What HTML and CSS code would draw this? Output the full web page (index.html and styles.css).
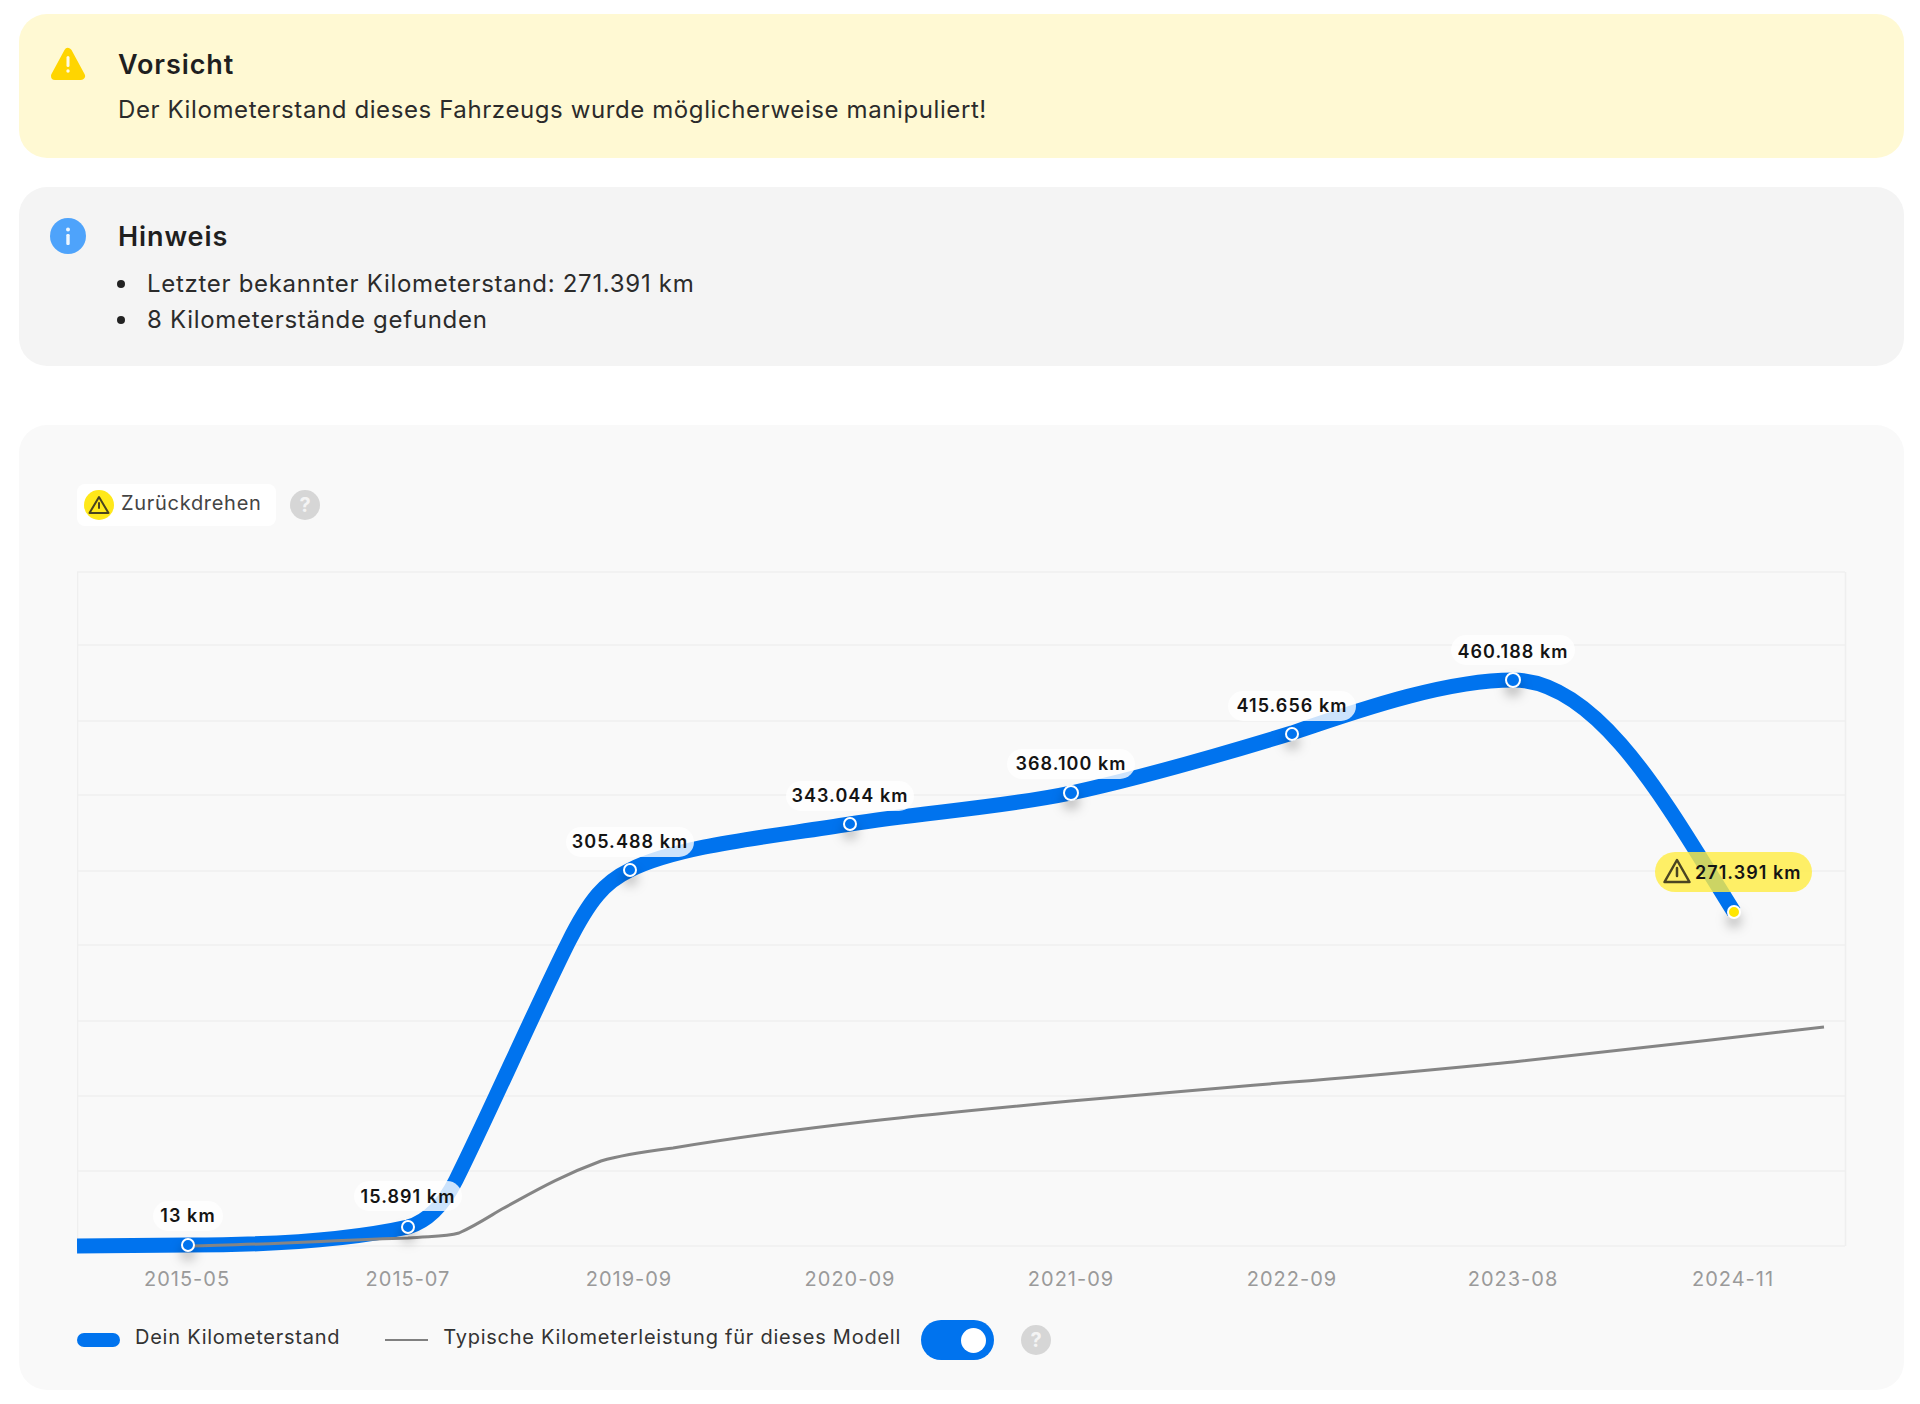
FILE: index.html
```html
<!DOCTYPE html>
<html lang="de">
<head>
<meta charset="utf-8">
<title>Kilometerstand</title>
<link rel="stylesheet" href="styles.css">
</head>
<body>
<main class="page">
  <section class="alert alert-warn">
    <svg class="alert-icon" viewBox="0 0 36 36"><path class="warn-shape" d="M18 5 31 29H5z"/><rect class="warn-mark" x="16.500" y="9" width="3" height="11" rx="1.500"/><circle class="warn-mark" cx="18" cy="24" r="1.700"/></svg>
    <div class="alert-body">
      <h2 class="alert-title alert-title-warn">Vorsicht</h2>
      <p class="alert-text">Der Kilometerstand dieses Fahrzeugs wurde möglicherweise manipuliert!</p>
    </div>
  </section>
  <section class="alert alert-info">
    <svg class="alert-icon info-icon" viewBox="0 0 36 36"><circle class="info-shape" cx="18" cy="18" r="18"/><rect class="warn-mark" x="16.300" y="16" width="3.400" height="11" rx="1.200"/><circle class="warn-mark" cx="18" cy="11.500" r="2"/></svg>
    <div class="alert-body">
      <h2 class="alert-title alert-title-info">Hinweis</h2>
      <ul class="alert-list">
        <li>Letzter bekannter Kilometerstand: 271.391 km</li>
        <li>8 Kilometerstände gefunden</li>
      </ul>
    </div>
  </section>
  <section class="chart-card">
    <div class="chip-row">
      <div class="chip">
        <span class="chip-dot">
          <svg class="chip-icon" viewBox="0 0 24 24"><path class="tri" d="M12 4 21.500 20H2.500z"/><path class="tri" d="M12 10v5"/></svg>
        </span>
        <span class="chip-label">Zurückdrehen</span>
      </div>
      <span class="help">?</span>
    </div>
    <svg class="plot" viewBox="77 560 1770 730">
      <g class="grid">
        <path d="M77 572H1845M77 645H1845M77 721H1845M77 795H1845M77 871H1845M77 945H1845M77 1021H1845M77 1096H1845M77 1171H1845M77 1246H1845"/>
        <path d="M77.500 572V1246M1845.500 572V1246"/>
      </g>
      <path class="km-line" d="M77 1246L188 1245C260 1245 345 1241 408 1227C425 1222 442 1208 456 1180C488 1116 535 1009 568 943C590 899 605 882 630 870C680 845 770 837 850 824C925 812 1000 808 1071 793C1145 777 1220 755 1292 733C1370 706 1450 680 1513 680C1600 680 1670 810 1734 912"/>
      <path class="typ-line" d="M188 1246C260 1245 340 1240 408 1238C430 1236 445 1237 459 1233C475 1226 490 1216 502 1209C530 1194 560 1176 601 1161C625 1154 650 1151 673 1148C800 1127 930 1114 1071 1101C1150 1094 1220 1088 1292 1082C1370 1076 1440 1069 1513 1062C1620 1050 1720 1039 1824 1027"/>
      <g class="points">
        <circle class="pt" cx="188" cy="1245" r="6"/>
        <circle class="pt" cx="408" cy="1227" r="6"/>
        <circle class="pt" cx="630" cy="870" r="6"/>
        <circle class="pt" cx="850" cy="824" r="6"/>
        <circle class="pt" cx="1071" cy="793" r="7"/>
        <circle class="pt" cx="1292" cy="734" r="6"/>
        <circle class="pt" cx="1513" cy="680" r="7"/>
        <circle class="pt-warn" cx="1734" cy="912" r="6"/>
      </g>
      <g class="labels">
        <rect class="pill" x="153" y="1201" width="70" height="30" rx="15"/>
        <text class="val" x="188" y="1222">13 km</text>
        <rect class="pill" x="354" y="1181" width="108" height="30" rx="15"/>
        <text class="val" x="408" y="1203">15.891 km</text>
        <rect class="pill" x="566" y="827" width="128" height="30" rx="15"/>
        <text class="val" x="630" y="848">305.488 km</text>
        <rect class="pill" x="786" y="781" width="128" height="30" rx="15"/>
        <text class="val" x="850" y="802">343.044 km</text>
        <rect class="pill" x="1007" y="749" width="128" height="30" rx="15"/>
        <text class="val" x="1071" y="770">368.100 km</text>
        <rect class="pill" x="1228" y="691" width="128" height="30" rx="15"/>
        <text class="val" x="1292" y="712">415.656 km</text>
        <rect class="pill" x="1451" y="635" width="124" height="30" rx="15"/>
        <text class="val" x="1513" y="658">460.188 km</text>
        <rect class="pill-warn" x="1655" y="852" width="157" height="40" rx="20"/>
        <path class="tri-big" d="M1677 860 1689.500 882H1664.500z"/>
        <path class="tri-big" d="M1677 868v8"/>
        <text class="val val-left" x="1695" y="879">271.391 km</text>
      </g>
      <g class="axis">
        <text x="187" y="1286">2015-05</text>
        <text x="408" y="1286">2015-07</text>
        <text x="629" y="1286">2019-09</text>
        <text x="850" y="1286">2020-09</text>
        <text x="1071" y="1286">2021-09</text>
        <text x="1292" y="1286">2022-09</text>
        <text x="1513" y="1286">2023-08</text>
        <text x="1733" y="1286">2024-11</text>
      </g>
    </svg>
    <div class="legend">
      <span class="swatch-km"></span>
      <span class="legend-label">Dein Kilometerstand</span>
      <span class="swatch-typ"></span>
      <span class="legend-label">Typische Kilometerleistung für dieses Modell</span>
      <span class="toggle"><span class="knob"></span></span>
      <span class="help">?</span>
    </div>
  </section>
</main>
</body>
</html>
```
FILE: styles.css
```css
* { box-sizing: border-box; }
html, body { margin: 0; background: #fff; }
body { font-family: Inter, "Liberation Sans", sans-serif; color: #222; }
.page { display: flex; flex-direction: column; padding: 14px 16px 14px 19px; height: 1404px; }
.alert { display: flex; gap: 32px; padding: 33px 31px 0; border-radius: 28px; }
.alert-warn { background: #fff9d3; height: 144px; }
.alert-info { background: #f4f4f4; height: 179px; margin-top: 29px; }
.alert-icon { width: 36px; height: 36px; flex: none; }
.info-icon { margin-top: -2px; }
.warn-shape { fill: #ffd500; stroke: #ffd500; stroke-width: 8; stroke-linejoin: round; }
.info-shape { fill: #4ea3fb; }
.warn-mark { fill: #fff; opacity: .9; }
.alert-title { margin: 0; font-size: 27px; line-height: 32px; font-weight: 600; color: #1f1f1f; letter-spacing: .9px; }
.alert-title-warn { margin-top: 2px; }
.alert-title-info { margin-top: 1px; }
.alert-text { margin: 13px 0 0; font-size: 24px; line-height: 32px; color: #2b2b2b; letter-spacing: .6px; }
.alert-list { list-style: none; margin: 13px 0 0; padding: 0; font-size: 24px; line-height: 36px; color: #2b2b2b; letter-spacing: .7px; }
.alert-list li { display: flex; align-items: center; gap: 22px; }
.alert-list li::before { content: ""; width: 8px; height: 8px; border-radius: 50%; background: #222; flex: none; margin-left: -1px; }
.chart-card { margin-top: 59px; height: 965px; background: #f9f9f9; border-radius: 28px; padding: 59px 58px 30px; display: flex; flex-direction: column; }
.chip-row { display: flex; align-items: center; gap: 14px; height: 42px; }
.chip { display: flex; align-items: center; gap: 7px; height: 42px; width: 199px; padding-left: 7px; background: #fff; border-radius: 8px; }
.chip-dot { width: 30px; height: 30px; border-radius: 50%; background: #ffe81a; display: flex; align-items: center; justify-content: center; }
.chip-icon { width: 24px; height: 24px; }
.tri { fill: none; stroke: #4a4420; stroke-width: 2; stroke-linejoin: round; stroke-linecap: round; }
.chip-label { font-size: 20px; color: #444; margin-top: -4px; letter-spacing: .7px; }
.help { width: 30px; height: 30px; border-radius: 50%; background: #d6d6d6; color: #f4f4f4; font-size: 20px; font-weight: 700; display: flex; align-items: center; justify-content: center; }
.plot { display: block; width: 1770px; height: 730px; margin-top: 34px; flex: none; }
.grid path { fill: none; stroke: #efefef; stroke-width: 1.500; }
.km-line { fill: none; stroke: #0073ee; stroke-width: 15; }
.typ-line { fill: none; stroke: #858585; stroke-width: 3; }
.points circle { stroke: #fff; stroke-width: 2; filter: drop-shadow(0 8px 6px rgba(0, 0, 0, .28)); }
.pt { fill: #0073ee; }
.pt-warn { fill: #ffe600; }
.pill { fill: #fff; fill-opacity: .8; }
.pill-warn { fill: #ffec41; fill-opacity: .8; }
.tri-big { fill: none; stroke: #4a4522; stroke-width: 2.500; stroke-linejoin: round; stroke-linecap: round; }
.val { font-family: Inter, "Liberation Sans", sans-serif; font-size: 18px; font-weight: 600; fill: #141414; text-anchor: middle; letter-spacing: 1.05px; }
.val-left { text-anchor: start; }
.axis text { font-family: Inter, "Liberation Sans", sans-serif; font-size: 20px; fill: #9a9a9a; text-anchor: middle; letter-spacing: 1px; }
.legend { display: flex; align-items: center; height: 40px; margin-top: 30px; }
.swatch-km { width: 43px; height: 14px; border-radius: 7px; background: #0073ee; }
.legend-label { font-size: 20px; color: #333; margin-left: 15px; margin-top: -6px; letter-spacing: .75px; }
.swatch-typ { width: 43px; height: 2px; background: #808080; margin-left: 45px; }
.toggle { width: 73px; height: 40px; border-radius: 20px; background: #0073ee; margin-left: 20px; display: flex; align-items: center; justify-content: flex-end; padding-right: 8px; }
.knob { width: 25px; height: 25px; border-radius: 50%; background: #fff; }
.legend .help { margin-left: 27px; }
```
